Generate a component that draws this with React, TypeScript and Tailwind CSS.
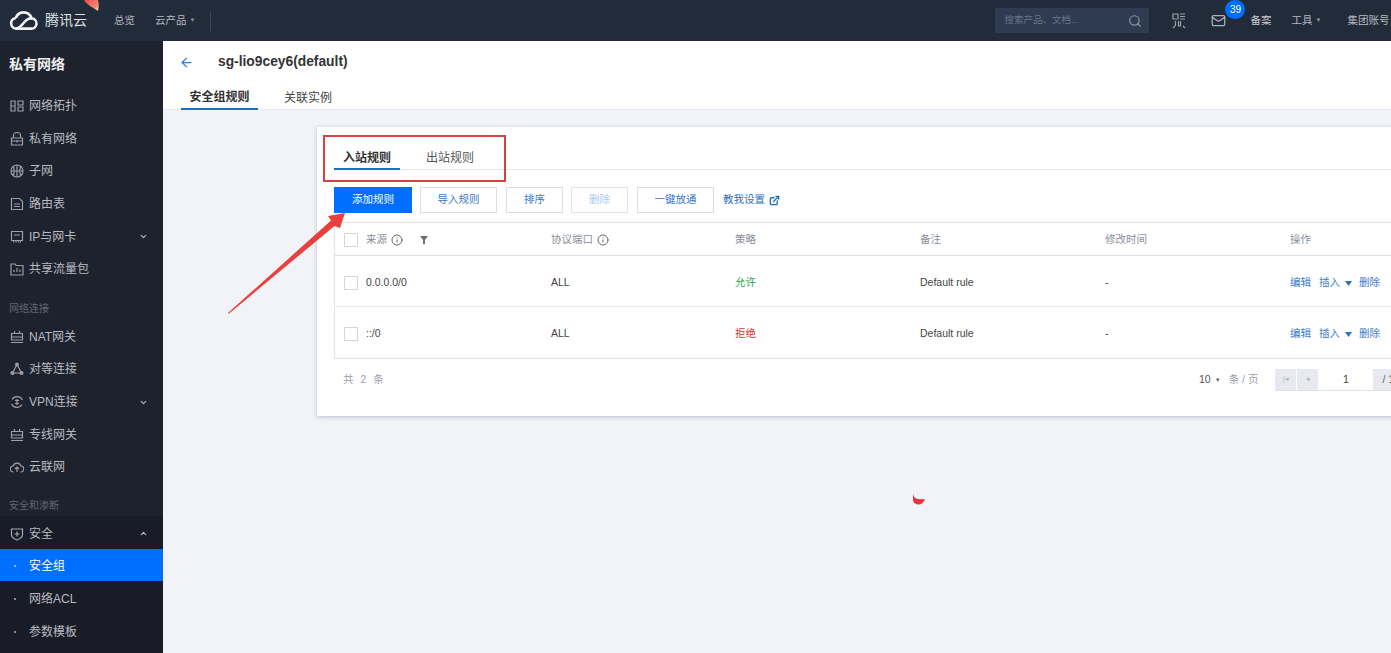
import React from "react";
import { ChevronDown, ChevronUp, Search, Mail, Info, ExternalLink, ArrowLeft } from "lucide-react";

const S = ({ children }: { children: React.ReactNode }) => (
  <svg width="14" height="14" viewBox="0 0 14 14" fill="none" stroke="currentColor" strokeWidth="1.2" className="shrink-0">{children}</svg>
);

const icons: Record<string, React.ReactNode> = {
  topo: <S><path d="M1 2h4v10H1zM1 7h4M8 2h5v4H8zM8 8h5v4H8z" /></S>,
  lock: <S><path d="M1.500 6h11v7h-11zM3.500 6V3.500a3.500 3 0 0 1 7 0V6M1.500 9h11M7 8v2.500" /></S>,
  globe: <S><circle cx="7" cy="7" r="6" /><path d="M1 7h12M7 1v12M3.500 2.500c1 3 1 6 0 9M10.500 2.500c-1 3-1 6 0 9" /></S>,
  doc: <S><path d="M1.500 1.500h8l3 3v8h-11zM4 7h6M4 9.500h6" /></S>,
  card: <S><path d="M1.500 1.500h11v9h-11zM4 5h6M3.500 10.500v2M6 10.500v2M8.500 10.500v2M10.500 10.500v2" /></S>,
  folder: <S><path d="M1 2h4l1 1.500h7V13H1zM4 10V8M7 10V6M10 10V7.500" /></S>,
  nat: <S><path d="M1.500 3.500h11V10h-11zM1.500 7h11M1 12.500h12M4.500 1v2.500M9.500 1v2.500" /></S>,
  peer: <S><path d="M7 2.500 2.500 11h9z" /><circle cx="7" cy="2.500" r="1.300" fill="currentColor" /><circle cx="2.500" cy="11" r="1.500" fill="currentColor" /><circle cx="11.500" cy="11" r="1.500" fill="currentColor" /></S>,
  vpn: <S><path d="M2 4.500A6 6 0 0 1 12.500 5M12 9.500A6 6 0 0 1 1.500 9M7 4v6M5 5.500h4M5 8.500h4" /></S>,
  cloud: <S><path d="M3.500 12A3 3 0 0 1 3 6a4.200 4.200 0 0 1 8 0 3 3 0 0 1-.5 6M7 12V7M5 9l2-2 2 2" /></S>,
  shield: <S><path d="M1.500 2h11v6c0 2.500-3 4-5.500 5-2.500-1-5.500-2.500-5.500-5zM7 4.500v5M4.500 7h5" /></S>,
};

const Item = ({ icon, label, arrow }: { icon: string; label: string; arrow?: boolean }) => (
  <div className="flex h-[32.6px] items-center pl-[10px] pr-[15px] text-[#b7bbc1]">
    <span className="text-[#9a9ea6]">{icons[icon]}</span>
    <span className="ml-[5px] flex-1 text-[12px]">{label}</span>
    {arrow && <ChevronDown size={9} strokeWidth={3} />}
  </div>
);

const Group = ({ label, size }: { label: string; size: string }) => (
  <div className={`flex items-end pl-[9px] text-[10px] text-[#5f6570] ${size}`}>{label}</div>
);

const Sub = ({ label, active }: { label: string; active?: boolean }) => (
  <div className={`flex h-[32.6px] items-center pl-[14px] pt-[3px] text-[12px] ${active ? "bg-[#006eff] text-white" : "text-[#b7bbc1]"}`}>
    <span className={`h-[2px] w-[2px] ${active ? "bg-[#8fc0ff]" : "bg-[#8a8e96]"}`} />
    <span className="ml-[13px]">{label}</span>
  </div>
);

const Btn = ({ w, label, disabled, primary }: { w: string; label: string; disabled?: boolean; primary?: boolean }) => (
  <div
    className={`flex h-[26px] items-center justify-center border text-[10.500px] ${w} ${
      primary ? "border-[#006eff] bg-[#006eff] text-white" : disabled ? "border-[#dfe2e8] text-[#a9cbf5]" : "border-[#d9dce2] text-[#3a78c8]"
    }`}
  >
    {label}
  </div>
);

const Check = () => <span className="block h-[14px] w-[14px] shrink-0 border border-[#d5d7dc] bg-white" />;

const cols = "grid grid-cols-[216px_184px_185px_185px_185px_200px] items-center";

const Row = ({ src, action, color, first }: { src: string; action: string; color: string; first?: boolean }) => (
  <div className={`${cols} h-[51px] text-[10.500px] text-[#444] ${first ? "border-b border-[#e9ebef] pt-[4px]" : "pt-[3px]"}`}>
    <div className="flex items-center gap-[8px] pl-[9px]"><Check /><span>{src}</span></div>
    <div>ALL</div>
    <div className={color}>{action}</div>
    <div>Default rule</div>
    <div>-</div>
    <div className="flex items-center text-[#3f7ccb]">
      <span>编辑</span>
      <span className="ml-[8px]">插入</span>
      <svg width="7" height="5" viewBox="0 0 7 5" className="ml-[5px]"><path d="M0 0h7L3.500 5z" fill="#2f6fbf" /></svg>
      <span className="ml-[7px]">删除</span>
    </div>
  </div>
);

export default function App() {
  return (
    <div className="relative flex h-[653px] w-[1391px] flex-col overflow-hidden bg-[#f2f3f8] font-['Liberation_Sans','Noto_Sans_CJK_SC',sans-serif]">
      <header className="flex h-[41px] shrink-0 items-center bg-[#222b3a] text-[#b4b9c1]">
        <svg width="29" height="21" viewBox="1 1 34 22" fill="none" stroke="#f4f5f6" strokeWidth="3" className="ml-[9px]">
          <path d="M9 21.500h18a6 6 0 0 0 .5-12C26 5 22.500 2.500 18 2.500c-4.500 0-7.500 2.500-9 6.500" />
          <path d="M9 9a6.300 6.300 0 0 0 0 12.500c4 0 6-3.500 9-6.500 3-3 5-6 9.500-5.500" />
        </svg>
        <span className="ml-[7px] w-[44px] text-[14px] text-[#dfe2e6]">腾讯云</span>
        <span className="ml-[25px] text-[10.500px]">总览</span>
        <span className="ml-[20px] text-[10.500px]">云产品</span>
        <span className="ml-[3px] text-[6px] text-[#8d929b]">▼</span>
        <span className="ml-[15px] h-[20px] w-px bg-[#3c4554]" />
        <div className="ml-[784px] flex h-[25px] w-[154px] items-center justify-between bg-[#2e3b50] pl-[9px] pr-[7px]">
          <span className="text-[9.500px] text-[#69758a]">搜索产品、文档...</span>
          <Search size={14} className="text-[#8e98a8]" />
        </div>
        <svg width="14" height="16" viewBox="0 0 14 16" fill="none" stroke="#9ba1aa" strokeWidth="1.200" className="ml-[23px]">
          <path d="M1 1h5v5H1zM8 1h5M8 3.500h5M8 6h5M3.500 8v5M1 15l2-2M13 15l-2-2M6.500 8v5h2V8" />
        </svg>
        <div className="relative ml-[25px]">
          <Mail size={15} className="text-[#aeb3bb]" />
          <span className="absolute -top-[13px] left-[14px] flex h-[19px] w-[20px] items-center justify-center rounded-full bg-[#006eff] text-[10px] text-white">39</span>
        </div>
        <span className="ml-[24px] text-[10.500px] text-[#c7cad0]">备案</span>
        <span className="ml-[20px] text-[10.500px]">工具</span>
        <span className="ml-[3px] text-[6px] text-[#8d929b]">▼</span>
        <span className="ml-[26px] whitespace-nowrap text-[10.500px]">集团账号</span>
      </header>

      <div className="flex min-h-0 flex-1">
        <aside className="flex w-[163px] shrink-0 flex-col bg-[#1e222d]">
          <div className="flex h-[49px] shrink-0 items-center pb-[2px] pl-[9px] text-[14px] font-bold text-[#eceef0]">私有网络</div>
          <Item icon="topo" label="网络拓扑" />
          <Item icon="lock" label="私有网络" />
          <Item icon="globe" label="子网" />
          <Item icon="doc" label="路由表" />
          <Item icon="card" label="IP与网卡" arrow />
          <Item icon="folder" label="共享流量包" />
          <Group label="网络连接" size="h-[35px] pb-[5px]" />
          <Item icon="nat" label="NAT网关" />
          <Item icon="peer" label="对等连接" />
          <Item icon="vpn" label="VPN连接" arrow />
          <Item icon="nat" label="专线网关" />
          <Item icon="cloud" label="云联网" />
          <Group label="安全和渗断" size="h-[32px] pb-[3px]" />
          <div className="flex-1 bg-[#191c26]">
            <div className="flex h-[33px] items-center pl-[10px] pr-[15px] pt-[3px] text-[#b7bbc1]">
              <span className="text-[#a5a9b0]">{icons.shield}</span>
              <span className="ml-[5px] flex-1 text-[12px]">安全</span>
              <ChevronUp size={9} strokeWidth={3} />
            </div>
            <Sub label="安全组" active />
            <Sub label="网络ACL" />
            <Sub label="参数模板" />
          </div>
        </aside>

        <main className="min-w-0 flex-1">
          <div className="h-[69px] border-b border-[#e6e8ec] bg-white">
            <div className="flex h-[42px] items-center pl-[16px] pt-[1px]">
              <ArrowLeft size={15} className="text-[#2f7fd6]" />
              <span className="ml-[24px] text-[13.800px] font-bold text-[#333]">sg-lio9cey6(default)</span>
            </div>
            <div className="flex h-[27px] pl-[18px] text-[12px]">
              <div className="flex w-[77px] items-center justify-center border-b-2 border-[#1e6fc4] pt-[3px] font-bold text-[#333]">安全组规则</div>
              <div className="ml-[26px] flex items-center pt-[3px] text-[#444]">关联实例</div>
            </div>
          </div>

          <section className="ml-[154px] mt-[17px] h-[289px] w-[1100px] bg-white pl-[17px] shadow-[0_1px_4px_rgba(80,90,120,0.35)]">
            <div className="flex h-[43px] items-end border-b border-[#e8eaee] text-[12px]">
              <div className="-mb-px flex h-[30px] w-[66px] items-center justify-center border-b-2 border-[#1e6fc4] pt-[7px] font-bold text-[#333]">入站规则</div>
              <div className="ml-[26px] flex h-[30px] items-center pt-[7px] text-[#555]">出站规则</div>
            </div>
            <div className="mt-[17px] flex items-center">
              <Btn primary w="w-[78px]" label="添加规则" />
              <div className="ml-[8px]"><Btn w="w-[77px]" label="导入规则" /></div>
              <div className="ml-[9px]"><Btn w="w-[57px]" label="排序" /></div>
              <div className="ml-[8px]"><Btn disabled w="w-[57px]" label="删除" /></div>
              <div className="ml-[9px]"><Btn w="w-[77px]" label="一键放通" /></div>
              <span className="ml-[9px] text-[10.500px] text-[#2f6fbf]">教我设置</span>
              <ExternalLink size={11} strokeWidth={3} className="ml-[4px] text-[#1e6fc4]" />
            </div>
            <div className="mt-[9px] h-[137px] border border-r-0 border-[#dfe1e6]">
              <div className={`${cols} h-[33px] border-b border-[#dfe1e6] pt-[1px] text-[10.500px] text-[#8a8f98]`}>
                <div className="flex items-center pl-[9px]">
                  <Check />
                  <span className="ml-[8px]">来源</span>
                  <Info size={12} className="ml-[4px] text-[#666]" />
                  <svg width="8" height="8" viewBox="0 0 8 8" className="ml-[17px]"><path d="M0 0h8L5 4v4H3V4z" fill="#6b7078" /></svg>
                </div>
                <div className="flex items-center">协议端口<Info size={12} className="ml-[4px] text-[#666]" /></div>
                <div>策略</div>
                <div>备注</div>
                <div>修改时间</div>
                <div>操作</div>
              </div>
              <Row src="0.0.0.0/0" action="允许" color="text-[#29a34a]" first />
              <Row src="::/0" action="拒绝" color="text-[#d8393a]" />
            </div>
            <div className="mt-[10px] flex h-[22px] items-center whitespace-nowrap text-[10.500px] text-[#9a9ea6]">
              <span className="ml-[9px] w-[856px] tracking-[2px]">共 2 条</span>
              <span className="text-[#555]">10</span>
              <span className="ml-[4px] text-[6px] text-[#666]">▼</span>
              <span className="ml-[8px]">条 / 页</span>
              <div className="ml-[17px] flex h-[22px] items-center border-b border-[#dfe2e7] text-[#666]">
                <span className="flex h-full w-[21px] items-center justify-center bg-[#e6e9ef] text-[7px] text-[#b0b5bd]">|◂</span>
                <span className="ml-px flex h-full w-[21px] items-center justify-center bg-[#e6e9ef] text-[7px] text-[#b0b5bd]">◂</span>
                <span className="flex h-full w-[55px] items-center justify-center bg-white text-[#444]">1</span>
                <span className="flex h-full w-[40px] items-center bg-[#e6e9ef] pl-[9px]">/ 1</span>
              </div>
            </div>
          </section>
        </main>
      </div>

      {/* annotation overlays */}
      <div className="absolute left-[323px] top-[135px] h-[47px] w-[183px] border-2 border-[#d9403f]" />
      <svg className="absolute left-0 top-0" width="1391" height="653" fill="none">
        <defs>
          <linearGradient id="petal" x1="0" y1="0" x2="1" y2="1">
            <stop offset="0" stopColor="#ea4a55" />
            <stop offset="0.7" stopColor="#f08a70" />
            <stop offset="1" stopColor="#efe2c8" />
          </linearGradient>
        </defs>
        <path d="M228 313 L228.500 314 L334.500 226 L340 228 L345 213 L328 216 L331 220.500 Z" fill="#e8403c" />
        <path d="M84 0 C87 5 92 7 98 11 C99 7 99 3 98 0 Z" fill="url(#petal)" />
        <path d="M913 494 C914 499 919 500 925 499 C923 506 915 506 913 501 Z" fill="#e8323e" />
      </svg>
    </div>
  );
}
